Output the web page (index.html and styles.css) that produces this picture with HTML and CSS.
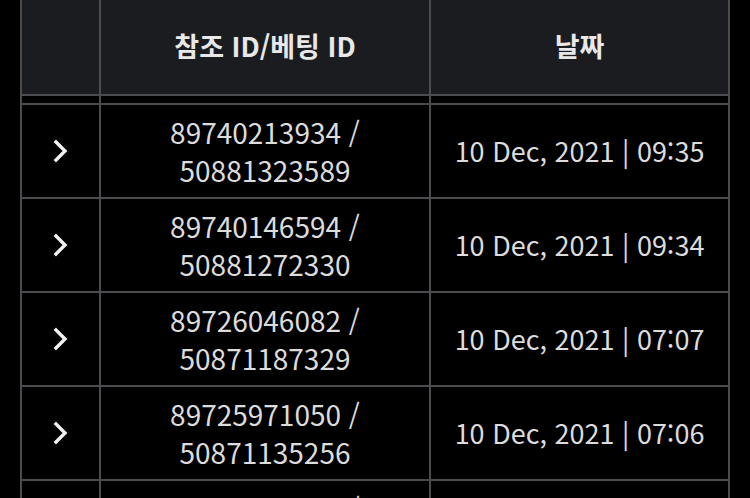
FILE: index.html
```html
<!DOCTYPE html>
<html lang="ko">
<head>
<meta charset="utf-8">
<link rel="stylesheet" href="styles.css">
</head>
<body>
<div class="table">
  <div class="row head">
    <div class="cell"></div>
    <div class="cell">참조 ID/베팅 ID</div>
    <div class="cell">날짜</div>
  </div>
  <div class="row spacer">
    <div class="cell"></div>
    <div class="cell"></div>
    <div class="cell"></div>
  </div>
  <div class="body">
    <div class="row item">
      <div class="cell"><svg class="chev" viewBox="0 0 18 24" width="18" height="24"><polyline points="4,3 13,12 4,21"/></svg></div>
      <div class="cell ids">89740213934 /<br>50881323589</div>
      <div class="cell date">10 Dec, 2021 | 09:35</div>
    </div>
    <div class="row item">
      <div class="cell"><svg class="chev" viewBox="0 0 18 24" width="18" height="24"><polyline points="4,3 13,12 4,21"/></svg></div>
      <div class="cell ids">89740146594 /<br>50881272330</div>
      <div class="cell date">10 Dec, 2021 | 09:34</div>
    </div>
    <div class="row item">
      <div class="cell"><svg class="chev" viewBox="0 0 18 24" width="18" height="24"><polyline points="4,3 13,12 4,21"/></svg></div>
      <div class="cell ids">89726046082 /<br>50871187329</div>
      <div class="cell date">10 Dec, 2021 | 07:07</div>
    </div>
    <div class="row item">
      <div class="cell"><svg class="chev" viewBox="0 0 18 24" width="18" height="24"><polyline points="4,3 13,12 4,21"/></svg></div>
      <div class="cell ids">89725971050 /<br>50871135256</div>
      <div class="cell date">10 Dec, 2021 | 07:06</div>
    </div>
    <div class="row item">
      <div class="cell"><svg class="chev" viewBox="0 0 18 24" width="18" height="24"><polyline points="4,3 13,12 4,21"/></svg></div>
      <div class="cell ids">89725902217 /<br>50871090114</div>
      <div class="cell date">10 Dec, 2021 | 07:05</div>
    </div>
  </div>
</div>
</body>
</html>
```

FILE: styles.css
```css
html, body {
  margin: 0;
  padding: 0;
  background: #000;
  height: 100%;
  overflow: hidden;
}
body {
  font-family: "Noto Sans CJK KR", "Noto Sans", sans-serif;
  color: #dcdcdc;
}
.table {
  margin: 0 20px;
  width: 710px;
}
.row {
  display: grid;
  grid-template-columns: 79px 330px 301px;
  box-sizing: border-box;
}
.cell {
  box-sizing: border-box;
  border-left: 2px solid #4b4b50;
  display: flex;
  align-items: center;
  justify-content: center;
  text-align: center;
}
.cell:last-child {
  border-right: 2px solid #4b4b50;
}
.head {
  height: 96px;
  background: #1b1c20;
  border-bottom: 2px solid #4b4b50;
  font-size: 27px;
  font-weight: 700;
  color: #e8e8e8;
}
.head .cell {
  padding-bottom: 4px;
}
.spacer {
  height: 7px;
}
.body {
  border-top: 2px solid #4b4b50;
}
.item {
  height: 94px;
  border-bottom: 2px solid #4b4b50;
  font-size: 28px;
  line-height: 38px;
}
.item .date {
  font-size: 27px;
}
.chev {
  display: block;
  fill: none;
  stroke: #f2f2f2;
  stroke-width: 3.4;
  stroke-linecap: square;
  stroke-linejoin: miter;
}
```
